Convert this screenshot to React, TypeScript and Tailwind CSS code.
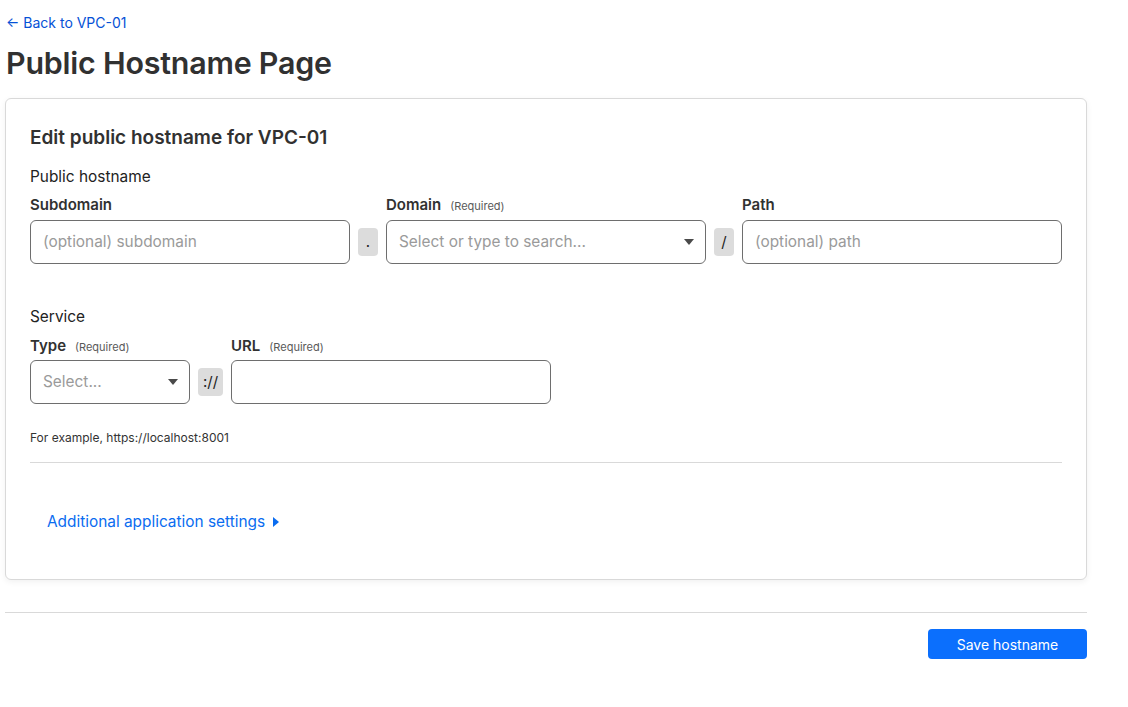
import React from "react";

function Label({ text, required, mb = "mb-[6px]" }: { text: string; required?: boolean; mb?: string }) {
  return (
    <div className={`${mb} flex items-baseline gap-[9px] h-[20px]`}>
      <span className="text-[15px] font-semibold text-[#313131]">{text}</span>
      {required && <span className="text-[11px] text-[#595959]">(Required)</span>}
    </div>
  );
}

function Sep({ children, w = "w-[20px]" }: { children: React.ReactNode; w?: string }) {
  return (
    <div className={`mt-[8px] flex h-[28px] ${w} shrink-0 items-center justify-center rounded-[4px] bg-[#dcdcdc] text-[15px] text-[#222]`}>
      {children}
    </div>
  );
}

function Caret() {
  return (
    <svg width="10" height="6" viewBox="0 0 10 6" className="shrink-0">
      <path d="M0 0h10L5 6z" fill="#4a4a4a" />
    </svg>
  );
}

function Field({
  placeholder,
  width = "w-[320px]",
  select,
}: {
  placeholder?: string;
  width?: string;
  select?: boolean;
}) {
  return (
    <div
      className={`flex h-[44px] ${width} shrink-0 items-center justify-between rounded-[6px] border border-[#6e6e6e] pl-[12px] pr-[11px] text-[15.4px] text-[#9a9a9a]`}
    >
      <span>{placeholder}</span>
      {select && <Caret />}
    </div>
  );
}

export default function App() {
  return (
    <div
      className="min-h-[707px] bg-white pl-[5px] pt-[13px]"
      style={{ fontFamily: "Inter, 'Noto Sans', sans-serif" }}
    >
      <div className="w-[1082px]">
        <a className="ml-[1px] block text-[14px] leading-[20px] text-[#0551d6]">← Back to VPC-01</a>
        <h1 className="ml-[1px] mt-[11px] text-[30.4px] font-semibold leading-[38px] text-[#313131] tracking-[-0.2px]">
          Public Hostname Page
        </h1>

        <div className="mt-[16px] rounded-[6px] border border-[#d9d9d9] bg-white pb-[47px] pl-[24px] pr-[24px] pt-[26px] shadow-[0_2px_6px_rgba(0,0,0,0.06)]">
          <h2 className="text-[19px] font-semibold leading-[26px] text-[#313131]">
            Edit public hostname for VPC-01
          </h2>
          <div className="mt-[16px] text-[15.4px] leading-[20px] text-[#222]">Public hostname</div>
          <div className="mt-[7px] flex gap-[8px]">
            <div>
              <Label text="Subdomain" />
              <Field placeholder="(optional) subdomain" />
            </div>
            <div className="pt-[26px]">
              <Sep>.</Sep>
            </div>
            <div>
              <Label text="Domain" required />
              <Field placeholder="Select or type to search..." select />
            </div>
            <div className="pt-[26px]">
              <Sep>/</Sep>
            </div>
            <div>
              <Label text="Path" />
              <Field placeholder="(optional) path" />
            </div>
          </div>

          <div className="mt-[43px] text-[15.4px] leading-[20px] text-[#222]">Service</div>
          <div className="mt-[8px] flex gap-[8px]">
            <div>
              <Label text="Type" required mb="mb-[5px]" />
              <Field placeholder="Select..." width="w-[160px]" select />
            </div>
            <div className="pt-[25px]">
              <Sep w="w-[25px]">://</Sep>
            </div>
            <div>
              <Label text="URL" required mb="mb-[5px]" />
              <Field width="w-[320px]" />
            </div>
          </div>
          <div className="mt-[26px] text-[12px] leading-[16px] text-[#333]">
            For example, https://localhost:8001
          </div>
          <div className="mt-[16px] border-t border-[#d9d9d9]" />

          <div className="ml-[17px] mt-[49px] flex items-center gap-[8px] text-[15.4px] leading-[20px] text-[#0a6cf0]">
            <span>Additional application settings</span>
            <svg width="6" height="10" viewBox="0 0 6 10">
              <path d="M0 0l6 5-6 5z" fill="#0a6cf0" />
            </svg>
          </div>
        </div>

        <div className="mt-[32px] border-t border-[#d9d9d9]" />
        <div className="mt-[16px] flex justify-end">
          <button className="h-[30px] w-[159px] rounded-[4px] bg-[#0b6ffd] text-[14px] text-white">
            Save hostname
          </button>
        </div>
      </div>
    </div>
  );
}
